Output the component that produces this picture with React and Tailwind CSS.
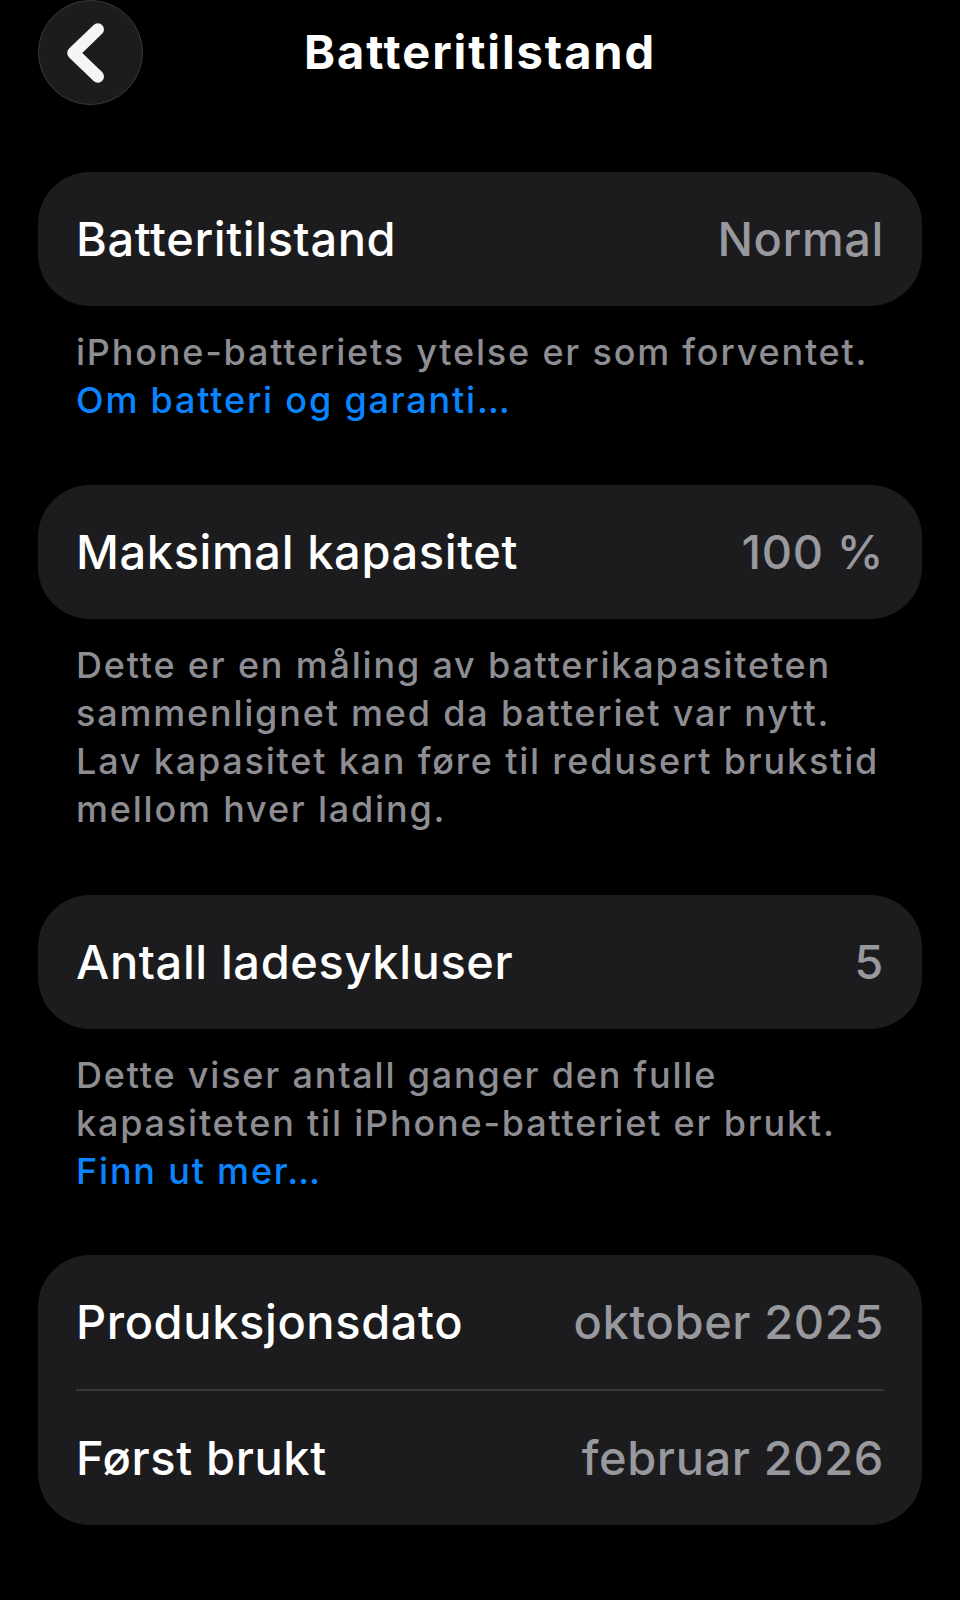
import React from "react";

function Row({ label, value }) {
  return (
    <div className="flex h-[134px] items-center justify-between px-[38px]">
      <span className="text-white">{label}</span>
      <span className="text-[#98989f]">{value}</span>
    </div>
  );
}

function Card({ children }) {
  return (
    <div className="mx-[38px] rounded-[52px] bg-[#1c1c1e] text-[47px] font-medium leading-[1.21] tracking-[0.6px]">
      {children}
    </div>
  );
}

function Desc({ children }) {
  return (
    <div className="mx-[38px] mt-[22px] px-[38px] whitespace-nowrap text-[36px] font-medium leading-[48px] tracking-[1.8px] text-[#8d8d93]">
      {children}
    </div>
  );
}

export default function App() {
  return (
    <div
      className="min-h-[1600px] w-[960px] bg-black"
      style={{ fontFamily: "Inter, 'Noto Sans', sans-serif" }}
    >
      <header className="grid h-[105px] grid-cols-[1fr_auto_1fr] items-center px-[38px]">
        <div className="flex">
          <div className="flex h-[105px] w-[105px] items-center justify-center rounded-full border-[1.5px] border-[#3a3a3c] bg-[#1c1c1e]">
            <svg width="105" height="105" viewBox="0 0 105 105" fill="none">
              <path
                d="M60 29 L35 53 L60 77"
                stroke="#f5f5f5"
                strokeWidth="12.5"
                strokeLinecap="round"
                strokeLinejoin="round"
              />
            </svg>
          </div>
        </div>
        <h1 className="-mt-[3px] text-[47px] font-bold leading-none tracking-[1.9px] text-white">
          Batteritilstand
        </h1>
        <div />
      </header>

      <div className="mt-[67px]">
        <Card>
          <Row label="Batteritilstand" value="Normal" />
        </Card>
        <Desc>
          iPhone-batteriets ytelse er som forventet.
          <br />
          <span className="text-[#0a84ff]">Om batteri og garanti…</span>
        </Desc>

        <div className="mt-[61px]">
          <Card>
            <Row label="Maksimal kapasitet" value="100 %" />
          </Card>
        </div>
        <Desc>
          Dette er en måling av batterikapasiteten
          <br />
          sammenlignet med da batteriet var nytt.
          <br />
          Lav kapasitet kan føre til redusert brukstid
          <br />
          mellom hver lading.
        </Desc>

        <div className="mt-[62px]">
          <Card>
            <Row label="Antall ladesykluser" value="5" />
          </Card>
        </div>
        <Desc>
          Dette viser antall ganger den fulle
          <br />
          kapasiteten til iPhone-batteriet er brukt.
          <br />
          <span className="text-[#0a84ff]">Finn ut mer…</span>
        </Desc>

        <div className="mt-[60px]">
          <Card>
            <Row label="Produksjonsdato" value="oktober 2025" />
            <div className="mx-[38px] h-[2px] bg-[#38383a]" />
            <Row label="Først brukt" value="februar 2026" />
          </Card>
        </div>
      </div>
    </div>
  );
}
